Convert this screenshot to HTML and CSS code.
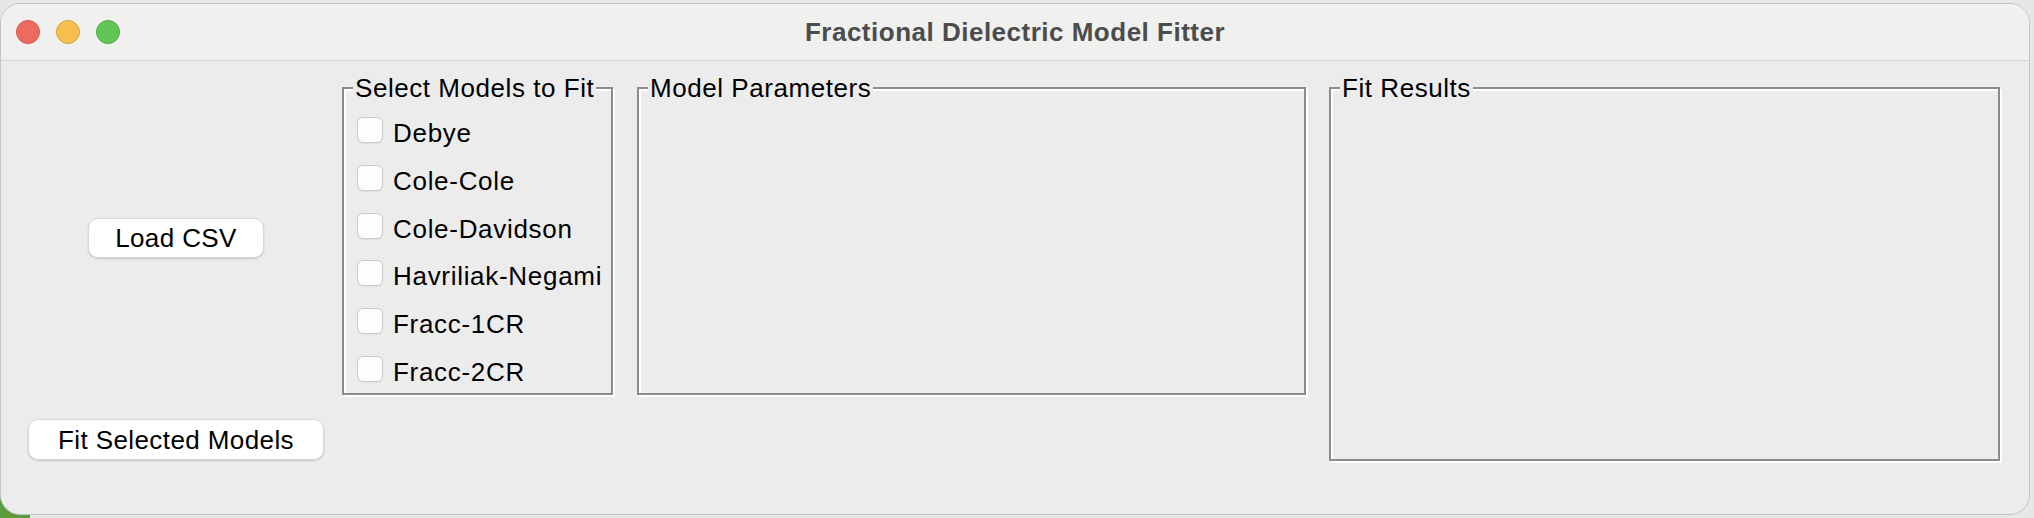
FILE: index.html
```html
<!DOCTYPE html>
<html lang="en">
<head>
<meta charset="utf-8">
<title>Fractional Dielectric Model Fitter</title>
<link rel="stylesheet" href="styles.css">
</head>
<body>
<div class="window">
  <div class="titlebar">
    <div class="lights">
      <span class="light red"></span>
      <span class="light yellow"></span>
      <span class="light green"></span>
    </div>
    <div class="title">Fractional Dielectric Model Fitter</div>
    <div class="spacer"></div>
  </div>
  <div class="content">
    <button class="btn load">Load CSV</button>
    <fieldset class="group models">
      <legend>Select Models to Fit</legend>
      <label class="option"><input type="checkbox" class="check"><span>Debye</span></label>
      <label class="option"><input type="checkbox" class="check"><span>Cole-Cole</span></label>
      <label class="option"><input type="checkbox" class="check"><span>Cole-Davidson</span></label>
      <label class="option"><input type="checkbox" class="check"><span>Havriliak-Negami</span></label>
      <label class="option"><input type="checkbox" class="check"><span>Fracc-1CR</span></label>
      <label class="option"><input type="checkbox" class="check"><span>Fracc-2CR</span></label>
    </fieldset>
    <fieldset class="group params">
      <legend>Model Parameters</legend>
    </fieldset>
    <fieldset class="group results">
      <legend>Fit Results</legend>
    </fieldset>
    <button class="btn fit">Fit Selected Models</button>
  </div>
</div>
</body>
</html>
```
FILE: styles.css
```css
html, body {
  margin: 0;
  padding: 0;
}

body {
  width: 2034px;
  height: 518px;
  overflow: hidden;
  background:
    linear-gradient(#5a9c3e, #5a9c3e) left bottom / 30px 22px no-repeat,
    #e7e7e7;
  font-family: "Liberation Sans", Arial, sans-serif;
}

.window {
  margin-top: 3px;
  width: 2030px;
  height: 512px;
  box-sizing: border-box;
  border: 1px solid #c4c4c4;
  border-radius: 20px;
  overflow: hidden;
  background: #ececec;
}

.titlebar {
  display: grid;
  grid-template-columns: 1fr auto 1fr;
  align-items: center;
  height: 56px;
  border-bottom: 1px solid #d3d3d3;
  background: #f0f0ef;
}

.lights {
  display: flex;
  gap: 16px;
  padding-left: 15px;
}

.light {
  width: 24px;
  height: 24px;
  border-radius: 50%;
  box-sizing: border-box;
  border: 1px solid;
}

.red { background: #ee6a5f; border-color: #d4574c; }
.yellow { background: #f5c04f; border-color: #d9a23f; }
.green { background: #62c655; border-color: #52a843; }

.title {
  font-weight: bold;
  font-size: 26px;
  line-height: 30px;
  letter-spacing: 0.5px;
  color: #4c4c4c;
}

.content {
  display: grid;
  grid-template-columns: 296px 291px 693px 694px;
  grid-template-rows: 323px 66px;
  padding: 13px 0 0 27px;
}

.btn {
  font-family: "Liberation Sans", Arial, sans-serif;
  font-size: 26px;
  line-height: 30px;
  letter-spacing: 0.4px;
  color: #000;
  background: #fff;
  border: 1px solid #d6d6d6;
  border-radius: 10px;
  box-shadow: 0 1px 2px rgba(0, 0, 0, 0.16);
  padding: 0;
  box-sizing: border-box;
}

.load {
  grid-column: 1;
  grid-row: 1;
  align-self: center;
  justify-self: center;
  margin-top: 5px;
  width: 176px;
  height: 40px;
}

.fit {
  grid-column: 1;
  grid-row: 2;
  align-self: start;
  justify-self: center;
  margin-top: 22px;
  width: 296px;
  height: 41px;
}

.group {
  margin: 0 2px 2px 0;
  padding: 4px 0 0 13px;
  border: 2px solid #8c8c8c;
  box-shadow: inset 2px 2px 0 #ffffff, 2px 2px 0 #ffffff;
  min-width: 0;
}

.group legend {
  margin-left: -4px;
  padding: 0 2px;
  font-size: 26px;
  line-height: 28px;
  letter-spacing: 0.55px;
  color: #000;
  background: #ececec;
}

.models {
  grid-column: 2;
  grid-row: 1;
  margin-left: 18px;
}

.params {
  grid-column: 3;
  grid-row: 1;
  margin-left: 22px;
}

.results {
  grid-column: 4;
  grid-row: 1 / 3;
  margin-left: 21px;
}

.option {
  display: flex;
  align-items: flex-start;
  gap: 10px;
  height: 47.8px;
  font-size: 26px;
  line-height: 30px;
  letter-spacing: 0.7px;
  color: #000;
}

.option span {
  margin-top: 12px;
}

.check {
  appearance: none;
  -webkit-appearance: none;
  flex: none;
  width: 26px;
  height: 26px;
  margin: 11px 0 0 0;
  box-sizing: border-box;
  border: 1px solid #cacaca;
  border-radius: 6px;
  background: #fdfdfd;
  box-shadow: 0 1px 1px rgba(0, 0, 0, 0.05);
}
```
